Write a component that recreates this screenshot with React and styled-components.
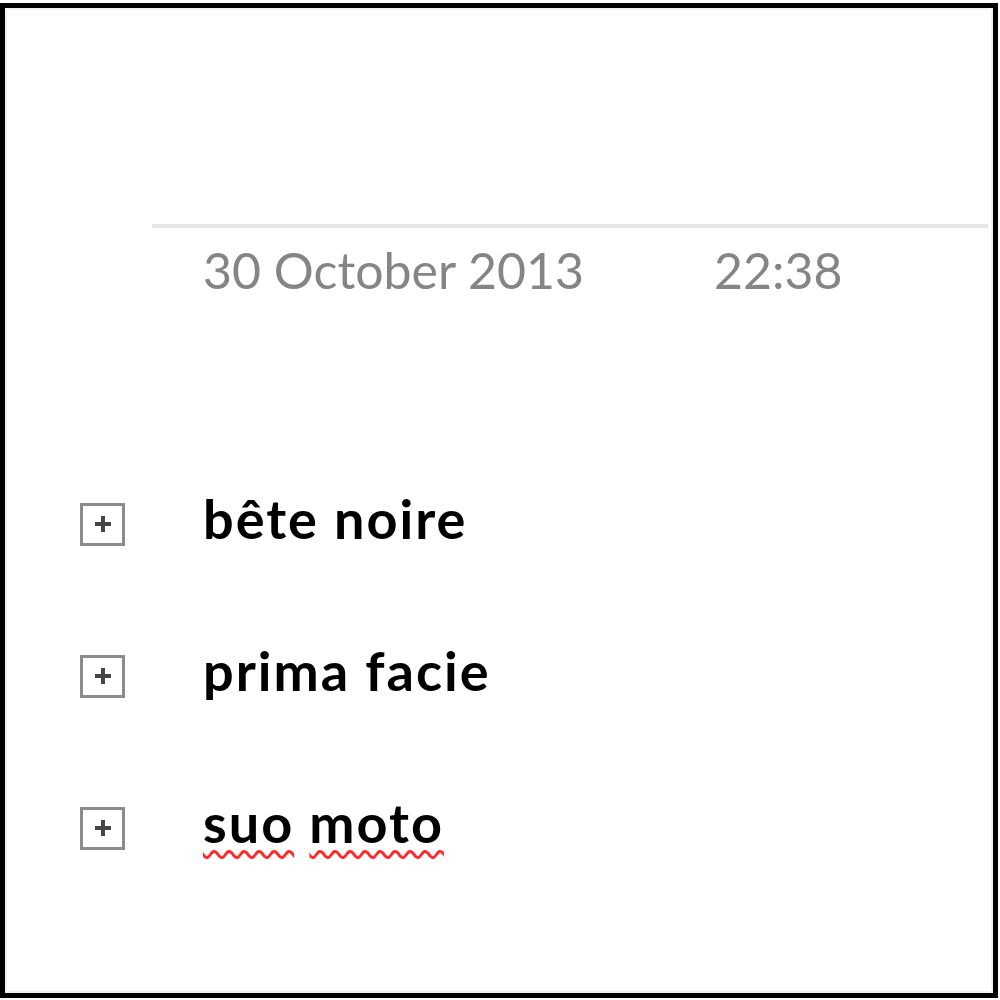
import React from 'react';
import styled, { createGlobalStyle } from 'styled-components';

const GlobalStyle = createGlobalStyle`
    html, body {
        margin: 0;
        padding: 0;
        background: #ffffff;
    }
`;

const Frame = styled.div`
    box-sizing: border-box;
    width: 998px;
    height: 995px;
    margin-top: 3px;
    border: 5px solid #000;
    background: #fff;
    box-shadow: inset 0 0 0 2px #f2f2f2;
    display: flex;
    flex-direction: column;
    font-family: Lato, "Open Sans", sans-serif;
`;

const Rule = styled.div`
    height: 4px;
    margin: 216px 5px 0 147px;
    background: #e6e6e6;
`;

const Stamp = styled.div`
    display: flex;
    padding-left: 198px;
    margin-top: 12px;
    color: #858585;
    font-size: 50px;
    line-height: 60px;

    span + span {
        margin-left: 130px;
    }
`;

const List = styled.div`
    display: flex;
    flex-direction: column;
    gap: 92px;
    margin-top: 188px;
`;

const Row = styled.div`
    display: flex;
    align-items: center;
    height: 60px;
`;

const Toggle = styled.div`
    box-sizing: border-box;
    width: 45px;
    height: 43px;
    margin: 12px 78px 0 75px;
    border: 3px solid #8c8c8c;
    display: flex;
    align-items: center;
    justify-content: center;

    svg {
        display: block;
    }
`;

const Term = styled.span`
    font-weight: 700;
    font-size: 54px;
    letter-spacing: 2px;
    color: #000;
    white-space: pre;
`;

const Word = styled.span`
    text-decoration: ${(props) => (props.$misspelt ? 'underline wavy #ff2a2a' : 'none')};
    text-decoration-thickness: 3px;
    text-underline-offset: 7px;
    text-decoration-skip-ink: none;
`;

function Plus() {
    return (
        <svg width="22" height="22" viewBox="0 0 22 22">
            <path d="M11 3v16M3 11h16" stroke="#454545" strokeWidth="4" />
        </svg>
    );
}

const terms = [
    { text: 'bête noire' },
    { text: 'prima facie' },
    { text: 'suo moto', misspelt: true },
];

export default function App() {
    return (
        <>
            <GlobalStyle />
            <Frame>
                <Rule />
                <Stamp>
                    <span>30 October 2013</span>
                    <span>22:38</span>
                </Stamp>
                <List>
                    {terms.map((t) => (
                        <Row key={t.text}>
                            <Toggle><Plus /></Toggle>
                            <Term>
                                {t.text.split(' ').map((w, i) => (
                                    <React.Fragment key={w}>
                                        {i > 0 && ' '}
                                        <Word $misspelt={t.misspelt}>{w}</Word>
                                    </React.Fragment>
                                ))}
                            </Term>
                        </Row>
                    ))}
                </List>
            </Frame>
        </>
    );
}
